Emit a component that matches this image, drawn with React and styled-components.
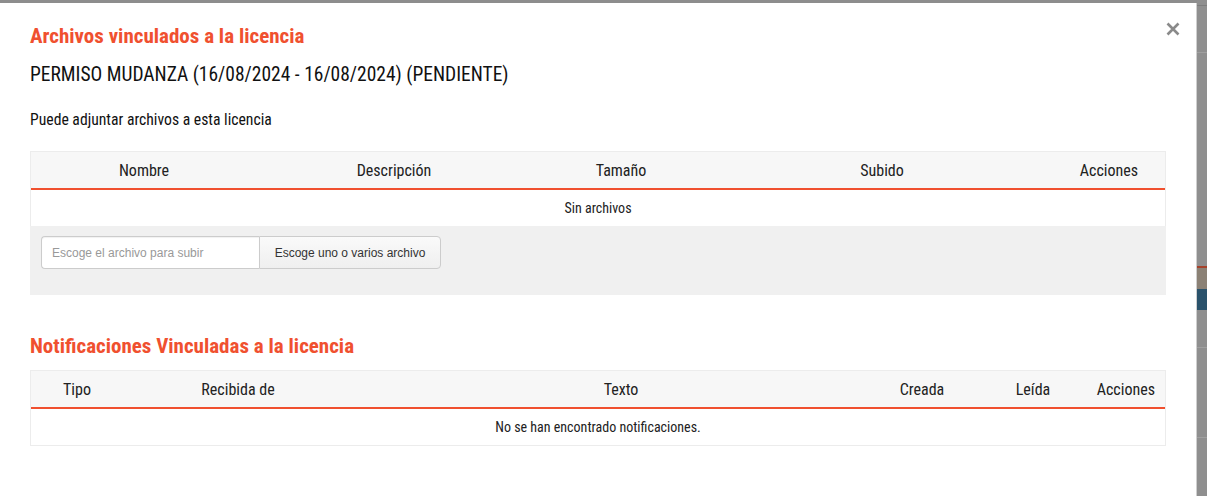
import styled, { createGlobalStyle } from "styled-components";

const RED = "#f0502f";
const FONT = '"Roboto Condensed", "Liberation Sans Narrow", Roboto, sans-serif';

const GlobalStyle = createGlobalStyle`
  html, body {
    margin: 0;
    padding: 0;
    background: #8d8d8d;
  }
  * { box-sizing: border-box; }
`;

const fileCols = [
  { label: "Nombre", width: "226px" },
  { label: "Descripción", width: "274px" },
  { label: "Tamaño", width: "180px" },
  { label: "Subido", width: "342px" },
  { label: "Acciones", width: "minmax(0, 1fr)" },
];

const notifCols = [
  { label: "Tipo", width: "92px" },
  { label: "Recibida de", width: "230px" },
  { label: "Texto", width: "536px" },
  { label: "Creada", width: "66px" },
  { label: "Leída", width: "156px" },
  { label: "Acciones", width: "minmax(0, 1fr)", end: true },
];

export default function App() {
  return (
    <Page>
      <GlobalStyle />
      <Modal>
        <CloseButton aria-label="Cerrar">
          <svg width="14" height="14" viewBox="0 0 14 14">
            <path d="M1.5 1.5 L12.5 12.5 M12.5 1.5 L1.5 12.5" stroke="#8a8a8a" strokeWidth="2.6" />
          </svg>
        </CloseButton>

        <SectionTitle>Archivos vinculados a la licencia</SectionTitle>
        <LicenseName>PERMISO MUDANZA (16/08/2024 - 16/08/2024) (PENDIENTE)</LicenseName>
        <Hint>Puede adjuntar archivos a esta licencia</Hint>

        <Table>
          <HeadRow $cols={fileCols.map((c) => c.width).join(" ")}>
            {fileCols.map((c) => (
              <HeadCell key={c.label}>{c.label}</HeadCell>
            ))}
          </HeadRow>
          <EmptyRow>Sin archivos</EmptyRow>
          <UploadArea>
            <InputGroup>
              <FileInput placeholder="Escoge el archivo para subir" readOnly />
              <BrowseButton>Escoge uno o varios archivo</BrowseButton>
            </InputGroup>
          </UploadArea>
        </Table>

        <SectionTitle $second>Notificaciones Vinculadas a la licencia</SectionTitle>
        <Table>
          <HeadRow $cols={notifCols.map((c) => c.width).join(" ")}>
            {notifCols.map((c) => (
              <HeadCell key={c.label} $end={c.end}>
                {c.label}
              </HeadCell>
            ))}
          </HeadRow>
          <EmptyRow>No se han encontrado notificaciones.</EmptyRow>
        </Table>
      </Modal>

      <Backdrop>
        <BackLine $top={5} />
        <BackLine $top={46} $light />
        <BackBlock $top={213} $h={2} $color="#a5422c" />
        <BackBlock $top={0} $h={21} $color="#8b8175" />
        <BackBlock $top={0} $h={21} $color="#2a526b" />
        <BackLine $top={37} $light />
        <BackLine $top={89} $light />
      </Backdrop>
    </Page>
  );
}

const Page = styled.div`
  display: flex;
  height: 496px;
  width: 1207px;
  overflow: hidden;
  padding-top: 3px;
  background: #8d8d8d;
  font-family: ${FONT};
`;

const Modal = styled.div`
  position: relative;
  width: 1197px;
  flex-shrink: 0;
  height: 493px;
  background: #fff;
  border-right: 1px solid #cfcfcf;
  padding: 20px 30px 0 30px;
`;

const CloseButton = styled.button`
  position: absolute;
  top: 19px;
  right: 16px;
  border: 0;
  background: none;
  padding: 0;
  width: 14px;
  height: 14px;
  display: flex;
  cursor: pointer;
`;

const SectionTitle = styled.h2`
  margin: ${(p) => (p.$second ? "38px 0 11px" : "0")};
  font-size: 21px;
  line-height: 26px;
  font-weight: 700;
  color: ${RED};
`;

const LicenseName = styled.div`
  margin-top: 14px;
  font-size: 19.5px;
  line-height: 24px;
  color: #111;
`;

const Hint = styled.p`
  margin: 23px 0 21px;
  font-size: 15.7px;
  line-height: 20px;
  color: #111;
`;

const Table = styled.div`
  display: flex;
  flex-direction: column;
  border: 1px solid #ececec;
`;

const HeadRow = styled.div`
  display: grid;
  grid-template-columns: ${(p) => p.$cols};
  height: 38px;
  align-items: center;
  background: #f7f7f7;
  border-bottom: 2px solid ${RED};
`;

const HeadCell = styled.div`
  display: flex;
  min-width: 0;
  justify-content: ${(p) => (p.$end ? "flex-end" : "center")};
  padding-right: ${(p) => (p.$end ? "10px" : "0")};
  white-space: nowrap;
  font-size: 16px;
  color: #222;
`;

const EmptyRow = styled.div`
  height: 36px;
  display: flex;
  align-items: center;
  justify-content: center;
  font-size: 14px;
  color: #222;
  background: #fff;
`;

const UploadArea = styled.div`
  background: #f0f0f0;
  padding: 10px 11px 26px;
  margin: 0 -1px -1px;
`;

const InputGroup = styled.div`
  display: flex;
  width: 400px;
  height: 33px;
`;

const FileInput = styled.input`
  width: 218px;
  height: 100%;
  border: 1px solid #cccccc;
  border-right: 0;
  border-radius: 4px 0 0 4px;
  padding: 0 10px;
  font-family: "Liberation Sans", Arial, sans-serif;
  font-size: 12px;
  color: #555;
  background: #fff;
  box-shadow: inset 0 1px 1px rgba(0, 0, 0, 0.06);
  outline: none;
  &::placeholder {
    color: #999;
  }
`;

const BrowseButton = styled.button`
  flex: 1;
  height: 100%;
  border: 1px solid #cccccc;
  border-radius: 0 4px 4px 0;
  background: linear-gradient(#fafafa, #efefef);
  font-family: "Liberation Sans", Arial, sans-serif;
  font-size: 12px;
  color: #333;
  padding: 0 12px;
`;

const Backdrop = styled.div`
  flex: 1;
  display: flex;
  flex-direction: column;
  margin-top: -3px;
  background: #8f8f8f;
`;

const BackLine = styled.div`
  margin-top: ${(p) => p.$top}px;
  height: 1px;
  background: ${(p) => (p.$light ? "#a0a0a0" : "#7d7d7d")};
`;

const BackBlock = styled.div`
  margin-top: ${(p) => p.$top}px;
  height: ${(p) => p.$h}px;
  background: ${(p) => p.$color};
`;
